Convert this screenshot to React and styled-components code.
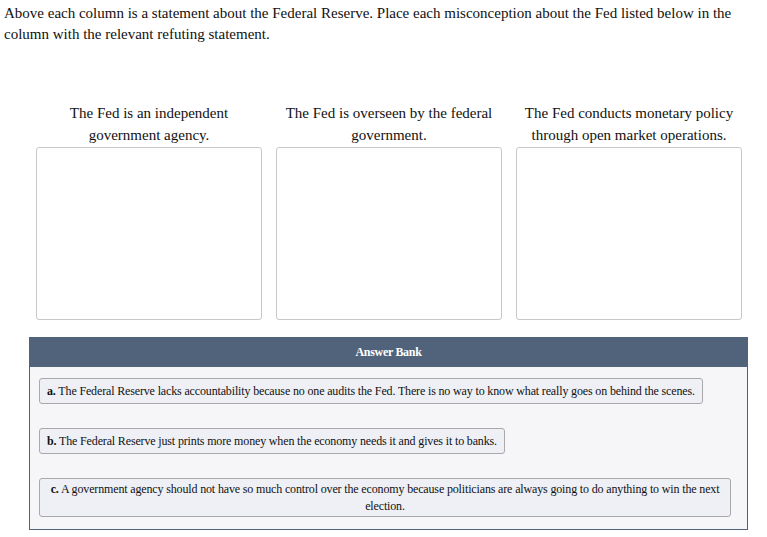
import React from "react";
import styled, { createGlobalStyle } from "styled-components";

const GlobalStyle = createGlobalStyle`
  body {
    margin: 0;
    background: #fff;
    font-family: "Liberation Serif", "Times New Roman", serif;
    color: #111;
  }
`;

const Page = styled.div`
  padding: 3px 4px 6px 4px;
`;

const Prompt = styled.p`
  margin: 0;
  font-size: 15px;
  line-height: 21px;
`;

const Columns = styled.div`
  display: grid;
  grid-template-columns: repeat(3, 226px);
  column-gap: 14px;
  margin: 57px 0 0 32px;
`;

const Column = styled.div`
  display: flex;
  flex-direction: column;
`;

const Heading = styled.div`
  font-size: 15px;
  line-height: 22px;
  text-align: center;
  height: 45px;
  padding: 0 8px;
`;

const DropZone = styled.div`
  height: 171px;
  border: 1px solid #c8c8c8;
  border-radius: 3px;
  background: #fff;
`;

const Bank = styled.div`
  margin: 17px 0 0 25px;
  width: 717px;
  border: 1px solid #50637a;
  background: #f6f6f8;
`;

const BankHeader = styled.div`
  height: 29px;
  background: #50637a;
  color: #fff;
  font-size: 12px;
  font-weight: bold;
  letter-spacing: -0.3px;
  display: flex;
  align-items: center;
  justify-content: center;
`;

const BankBody = styled.div`
  display: flex;
  flex-direction: column;
  align-items: flex-start;
  gap: 24px;
  padding: 11px 16px 12px 9px;
`;

// draggable answer chip; the long one spans the bank and centres its text
const Choice = styled.div`
  box-sizing: border-box;
  min-height: 26px;
  display: flex;
  align-items: center;
  justify-content: ${(p) => (p.$wide ? "center" : "flex-start")};
  border: 1px solid #a9a9a9;
  border-radius: 3px;
  background: #eef0f5;
  font-size: 12px;
  line-height: 17px;
  letter-spacing: -0.15px;
  padding: 1.5px 7px;
  text-align: ${(p) => (p.$wide ? "center" : "left")};
  align-self: ${(p) => (p.$wide ? "stretch" : "flex-start")};

  b {
    font-weight: bold;
  }
`;

const columns = [
  "The Fed is an independent government agency.",
  "The Fed is overseen by the federal government.",
  "The Fed conducts monetary policy through open market operations.",
];

const choices = [
  {
    key: "a",
    text: "The Federal Reserve lacks accountability because no one audits the Fed. There is no way to know what really goes on behind the scenes.",
  },
  {
    key: "b",
    text: "The Federal Reserve just prints more money when the economy needs it and gives it to banks.",
  },
  {
    key: "c",
    text: "A government agency should not have so much control over the economy because politicians are always going to do anything to win the next election.",
    wide: true,
  },
];

export default function App() {
  return (
    <Page>
      <GlobalStyle />
      <Prompt>
        Above each column is a statement about the Federal Reserve. Place each
        misconception about the Fed listed below in the column with the
        relevant refuting statement.
      </Prompt>

      <Columns>
        {columns.map((c) => (
          <Column key={c}>
            <Heading>{c}</Heading>
            <DropZone />
          </Column>
        ))}
      </Columns>

      <Bank>
        <BankHeader>Answer Bank</BankHeader>
        <BankBody>
          {choices.map((c) => (
            <Choice key={c.key} $wide={c.wide}>
              <span>
                <b>{c.key}.</b> {c.text}
              </span>
            </Choice>
          ))}
        </BankBody>
      </Bank>
    </Page>
  );
}
